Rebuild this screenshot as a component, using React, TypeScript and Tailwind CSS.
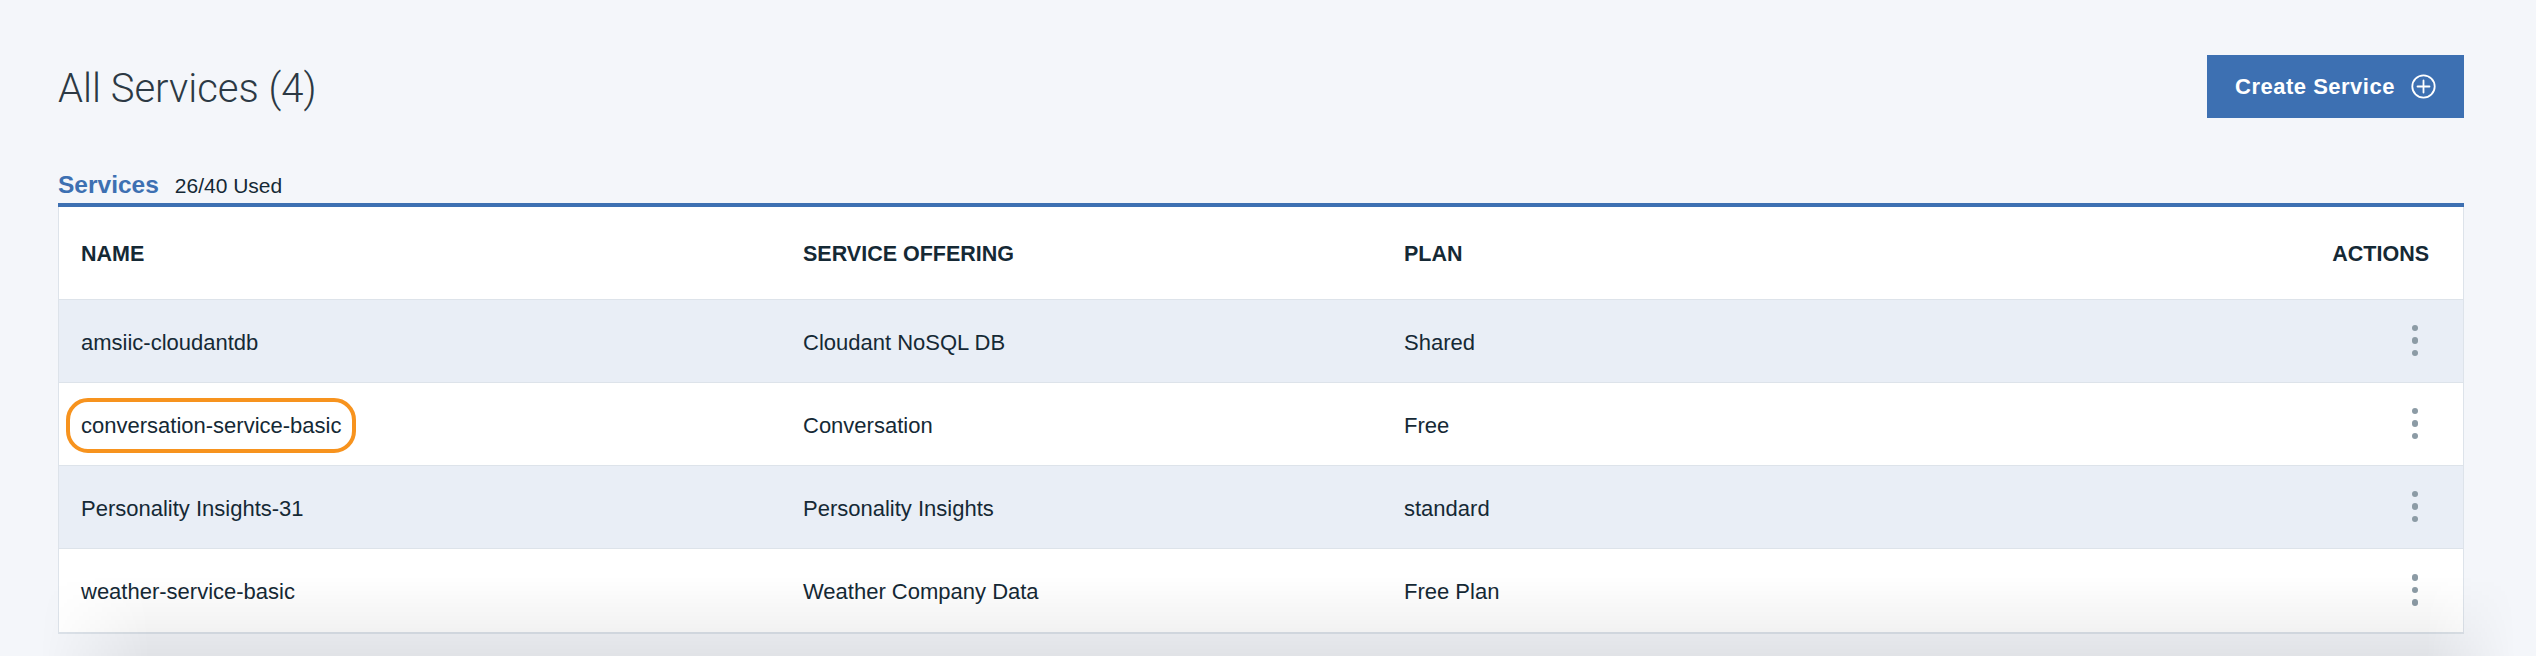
import { EllipsisVertical } from 'lucide-react';

type ServiceRow = {
  name: string;
  offering: string;
  plan: string;
  highlight?: boolean;
};

const rows: ServiceRow[] = [
  { name: 'amsiic-cloudantdb', offering: 'Cloudant NoSQL DB', plan: 'Shared' },
  { name: 'conversation-service-basic', offering: 'Conversation', plan: 'Free', highlight: true },
  { name: 'Personality Insights-31', offering: 'Personality Insights', plan: 'standard' },
  { name: 'weather-service-basic', offering: 'Weather Company Data', plan: 'Free Plan' },
];

function PlusCircle() {
  return (
    <svg width="25" height="25" viewBox="0 0 25 25" fill="none" stroke="currentColor" strokeWidth={1.8}>
      <circle cx="12.5" cy="12.5" r="11.2" />
      <path d="M12.5 6.5v12M6.5 12.5h12" strokeLinecap="round" />
    </svg>
  );
}

function Kebab() {
  return (
    <div className="flex flex-col gap-[6px]" aria-label="Actions">
      <span className="block w-[6.5px] h-[6.5px] rounded-full bg-[#8c9ba5]" />
      <span className="block w-[6.5px] h-[6.5px] rounded-full bg-[#8c9ba5]" />
      <span className="block w-[6.5px] h-[6.5px] rounded-full bg-[#8c9ba5]" />
    </div>
  );
}

export default function App() {
  return (
    <div
      className="relative h-[656px] overflow-hidden bg-[#f4f6fa] pl-[58px] pr-[72px] text-[#152935]"
      style={{ fontFamily: '"Liberation Sans", Arial, sans-serif' }}
    >
      {/* Page header */}
      <div className="flex items-start justify-between pt-[55px]">
        <h1
          className="mt-[14px] text-[40px] leading-[40px] font-light text-[#2c3944]"
          style={{ fontFamily: 'Roboto, "Liberation Sans", sans-serif' }}
        >
          All Services (4)
        </h1>
        <button className="flex h-[63px] w-[257px] items-center justify-center gap-[16px] bg-[#3d70b2] text-white">
          <span className="text-[22px] font-bold tracking-[0.5px]">Create Service</span>
          <PlusCircle />
        </button>
      </div>

      {/* Tab */}
      <div className="mt-[55px] flex items-baseline gap-[16px] leading-none">
        <span className="text-[24.5px] font-bold text-[#3d70b2]">Services</span>
        <span className="text-[21px]">26/40 Used</span>
      </div>
      <div className="mt-[5px] h-[4px] bg-[#3d70b2]" />

      {/* Table */}
      <div className="border-x border-b-2 border-[#dde3ea] bg-white">
        <div className="grid h-[93px] grid-cols-[722px_601px_1fr_260px] items-center border-b border-[#dde3ea] pt-[5px] text-[21.5px] font-bold leading-none">
          <div className="pl-[22px]">NAME</div>
          <div className="pl-[22px]">SERVICE OFFERING</div>
          <div className="pl-[22px]">PLAN</div>
          <div className="pr-[34px] text-right">ACTIONS</div>
        </div>
        {rows.map((row, i) => (
          <div
            key={row.name}
            className={`grid h-[83px] grid-cols-[722px_601px_1fr_260px] items-center text-[22px] leading-none ${
              i % 2 === 0 ? 'bg-[#e9eef6]' : 'bg-white'
            } ${i < rows.length - 1 ? 'border-b border-[#dde3ea]' : ''}`}
          >
            <div className="pl-[22px] pt-[4px]">
              {row.highlight ? (
                <span className="-ml-[15px] inline-flex h-[55px] items-center rounded-[22px] border-[4px] border-[#f7931e] px-[11px]">
                  {row.name}
                </span>
              ) : (
                row.name
              )}
            </div>
            <div className="pl-[22px] pt-[4px]">{row.offering}</div>
            <div className="pl-[22px] pt-[4px]">{row.plan}</div>
            <div className="flex justify-end pr-[45px]">
              <Kebab />
            </div>
          </div>
        ))}
      </div>

      <div className="pointer-events-none absolute bottom-0 left-[40px] right-[20px] h-[80px] bg-gradient-to-b from-transparent to-black/[0.075] [mask-image:linear-gradient(to_right,transparent,black_110px,black_calc(100%_-_90px),transparent)]" />
    </div>
  );
}
